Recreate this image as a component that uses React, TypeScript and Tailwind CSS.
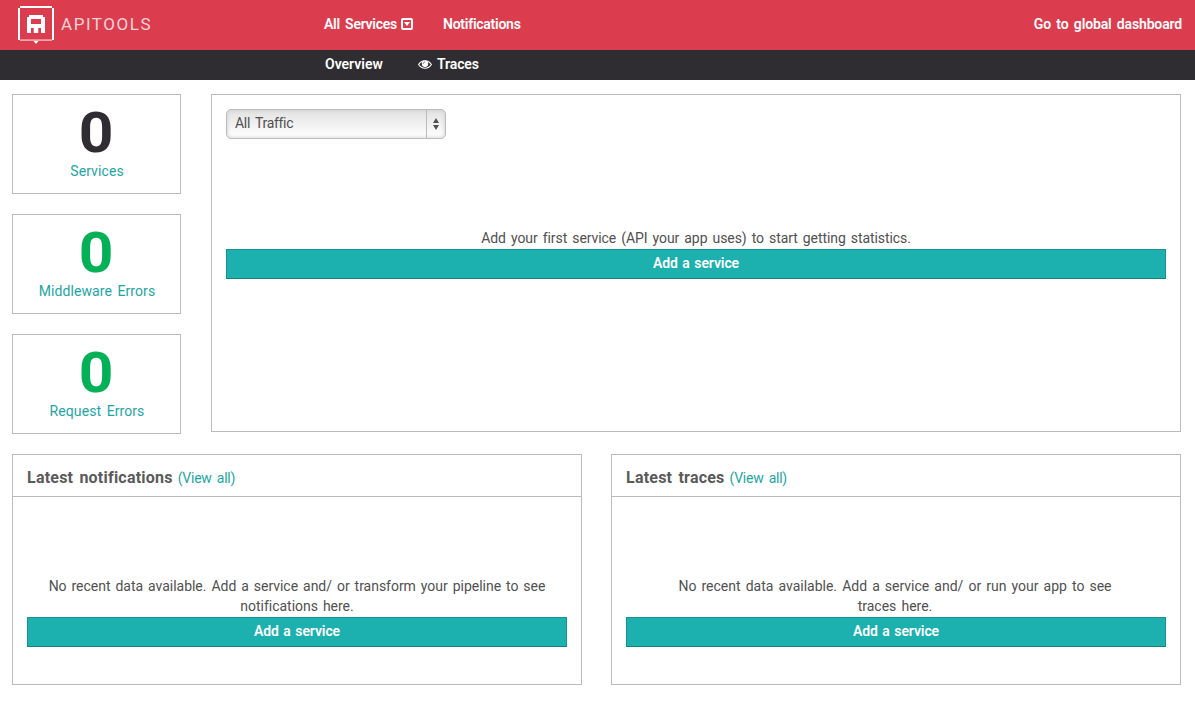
import type { ReactNode } from "react";

function Logo() {
  return (
    <a className="flex items-start">
      <svg width="36" height="38" viewBox="0 0 36 38" fill="none">
        <path d="M2 0H34V2H36V34H34V35H20.5L18 38L15.5 35H2V34H0V2H2Z" fill="#fff" />
        <path d="M2 2H34V33.6H2Z" fill="#dc3d4e" />
        <path d="M2 34.5H34" stroke="#f0a9b1" strokeWidth="1" />
        <path
          fill="#fff"
          fillRule="evenodd"
          d="M11 9H25V11H27V27H23V22H22V27H14V22H13V27H9V11H11ZM13 13V18H23V13Z"
        />
        <path d="M13.3 22H15.7V27H13.3ZM20.3 22H22.7V27H20.3Z" fill="#dc3d4e" />
      </svg>
      <span className="ml-[7px] mt-[8px] font-['Roboto'] text-[17px] leading-[20px] font-normal tracking-[1.55px] text-[#f8d4d8]">
        APITOOLS
      </span>
    </a>
  );
}

function Stat({ label, color }: { label: string; color: string }) {
  return (
    <div className="flex h-[100px] flex-col items-center border border-[#b9bdbd] pt-[10px]">
      <div className={`scale-x-[1.08] text-[56px] leading-[57px] font-bold ${color}`}>0</div>
      <div className="-mt-px pl-px text-[#1ea5a3] leading-[20px] tracking-[0.08px]">{label}</div>
    </div>
  );
}

function AddButton() {
  return (
    <button className="block h-[30px] w-full border border-[#189391] border-b-[#14807f] bg-[#1cb0af] pb-[2px] text-center leading-[26px] font-semibold tracking-[-0.1px] text-white [word-spacing:1.2px]">
      Add a service
    </button>
  );
}

function Panel({ title, textClass, children }: { title: string; textClass: string; children: ReactNode }) {
  return (
    <section className="h-[231px] w-[570px] border border-[#b9bdbd]">
      <h2 className="flex h-[42px] items-baseline border-b border-[#b9bdbd] px-[14px] pt-[11px] leading-[24px]">
        <span className="text-[16px] font-bold tracking-[0.22px] text-[#5a5a5a]">{title}</span>
        <a className="ml-[5px] tracking-[-0.25px] text-[#1ea5a3]">(View all)</a>
      </h2>
      <div className="px-[14px] pt-[79px]">
        <p className={`text-center leading-[20px] ${textClass}`}>{children}</p>
        <div className="pt-[1px]">
          <AddButton />
        </div>
      </div>
    </section>
  );
}

export default function App() {
  return (
    <div className="h-[705px] w-[1195px] overflow-hidden bg-white font-['Roboto','Liberation_Sans',sans-serif] text-[14px] text-[#505050] [word-spacing:2px]">
      <header className="flex h-[50px] bg-[#dc3d4e] pt-[6px] pr-[13px] pl-[18px] font-semibold text-white">
        <div className="w-[306px]">
          <Logo />
        </div>
        <nav className="flex flex-1 pt-[8px] leading-[20px] tracking-[-0.2px]">
          <a className="flex w-[119px]">
            <span className="w-[77px] tracking-[-0.25px] whitespace-nowrap">All Services</span>
            <svg className="mt-[4px]" width="12" height="12" viewBox="0 0 12 12">
              <rect x="1" y="1" width="10" height="10" rx="1" fill="none" stroke="#fff" strokeWidth="2" />
              <path d="M3 4H9L6 8Z" fill="#fff" />
            </svg>
          </a>
          <a className="tracking-[-0.25px]">Notifications</a>
          <a className="ml-auto tracking-[-0.15px]">Go to global dashboard</a>
        </nav>
      </header>
      <nav className="flex h-[30px] bg-[#2f2d32] pl-[325px] leading-[28px] font-semibold text-white">
        <a className="w-[93px]">Overview</a>
        <a className="flex tracking-[-0.1px]">
          <svg className="mt-[9px] mr-[5px]" width="14" height="11" viewBox="0 0 14 11">
            <path d="M0.6 5.5C3.6 0.4 10.4 0.4 13.4 5.5C10.4 10.4 3.6 10.4 0.6 5.5Z" fill="none" stroke="#fff" strokeWidth="1.1" />
            <circle cx="7" cy="4.8" r="3.2" fill="#fff" />
            <path d="M5.2 4.8C5.2 3.8 6 3 7 3" fill="none" stroke="#2f2d32" strokeWidth="0.7" />
          </svg>
          Traces
        </a>
      </nav>
      <main className="pt-[14px] pr-[14px] pl-[12px]">
        <div className="flex justify-between">
          <div className="flex w-[169px] flex-col gap-[20px]">
            <Stat label="Services" color="text-[#2f2d32]" />
            <Stat label="Middleware Errors" color="text-[#02b058]" />
            <Stat label="Request Errors" color="text-[#02b058]" />
          </div>
          <section className="h-[338px] w-[970px] border border-[#b9bdbd] p-[14px]">
            <div className="flex h-[30px] w-[220px] overflow-hidden rounded-[5px] border border-[#b9bdbd] bg-linear-to-b from-[#e2e2e2] to-white shadow-[inset_0_0_4px_#cccccc]">
              <span className="flex-1 pl-[8px] leading-[27px] tracking-[-0.3px]">All Traffic</span>
              <span className="flex w-[19px] items-center justify-center border-l border-[#b9bdbd]">
                <svg width="6" height="12" viewBox="0 0 6 12">
                  <path d="M0 5L3 0L6 5ZM0 7H6L3 12Z" fill="#505050" />
                </svg>
              </span>
            </div>
            <p className="pt-[89px] text-center leading-[20px] tracking-[-0.08px] [word-spacing:1.7px]">
              Add your first service (API your app uses) to start getting statistics.
            </p>
            <div className="pt-[1px]">
              <AddButton />
            </div>
          </section>
        </div>
        <div className="mt-[20px] flex justify-between">
          <Panel title="Latest notifications" textClass="tracking-[-0.02px] [word-spacing:1.5px]">
            No recent data available. Add a service and/ or transform your pipeline to see
            <br />
            notifications here.
          </Panel>
          <Panel title="Latest traces" textClass="tracking-[0px] pr-[2px] [word-spacing:1.6px]">
            No recent data available. Add a service and/ or run your app to see
            <br />
            traces here.
          </Panel>
        </div>
      </main>
    </div>
  );
}
